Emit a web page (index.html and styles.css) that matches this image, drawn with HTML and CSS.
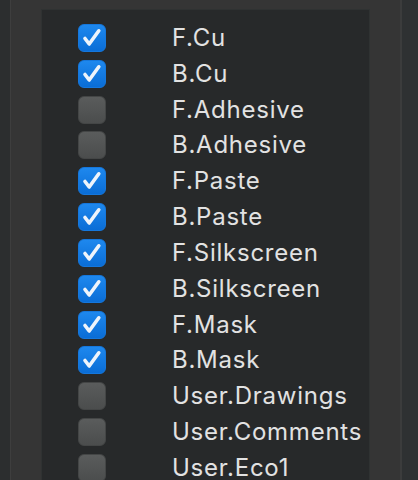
FILE: index.html
```html
<!DOCTYPE html>
<html>
<head>
<meta charset="utf-8">
<link rel="stylesheet" href="styles.css">
</head>
<body>
<div class="page">
  <div class="left-strip"></div>
  <div class="panel">
    <div class="list">
      <div class="row"><span class="cb on"><svg viewBox="0 0 26 26"><path d="M6 13.5 L10.2 19 L19.8 5.8"/></svg></span><span class="label">F.Cu</span></div>
      <div class="row"><span class="cb on"><svg viewBox="0 0 26 26"><path d="M6 13.5 L10.2 19 L19.8 5.8"/></svg></span><span class="label">B.Cu</span></div>
      <div class="row"><span class="cb"></span><span class="label">F.Adhesive</span></div>
      <div class="row"><span class="cb"></span><span class="label">B.Adhesive</span></div>
      <div class="row"><span class="cb on"><svg viewBox="0 0 26 26"><path d="M6 13.5 L10.2 19 L19.8 5.8"/></svg></span><span class="label">F.Paste</span></div>
      <div class="row"><span class="cb on"><svg viewBox="0 0 26 26"><path d="M6 13.5 L10.2 19 L19.8 5.8"/></svg></span><span class="label">B.Paste</span></div>
      <div class="row"><span class="cb on"><svg viewBox="0 0 26 26"><path d="M6 13.5 L10.2 19 L19.8 5.8"/></svg></span><span class="label">F.Silkscreen</span></div>
      <div class="row"><span class="cb on"><svg viewBox="0 0 26 26"><path d="M6 13.5 L10.2 19 L19.8 5.8"/></svg></span><span class="label">B.Silkscreen</span></div>
      <div class="row"><span class="cb on"><svg viewBox="0 0 26 26"><path d="M6 13.5 L10.2 19 L19.8 5.8"/></svg></span><span class="label">F.Mask</span></div>
      <div class="row"><span class="cb on"><svg viewBox="0 0 26 26"><path d="M6 13.5 L10.2 19 L19.8 5.8"/></svg></span><span class="label">B.Mask</span></div>
      <div class="row"><span class="cb"></span><span class="label">User.Drawings</span></div>
      <div class="row"><span class="cb"></span><span class="label">User.Comments</span></div>
      <div class="row"><span class="cb"></span><span class="label">User.Eco1</span></div>
    </div>
  </div>
  <div class="right-strip"></div>
</div>
</body>
</html>
```
FILE: styles.css
```css
html, body {
  margin: 0;
  padding: 0;
  height: 100%;
  overflow: hidden;
  background: #353535;
  font-family: Inter, "Noto Sans", sans-serif;
}
.page {
  display: flex;
  height: 480px;
}
.left-strip {
  width: 10px;
  background: #2c2e2f;
  border-right: 1px solid #3e3e3e;
}
.panel {
  width: 389px;
  background: #353535;
  padding: 9px 0 0 30px;
  box-sizing: border-box;
  overflow: hidden;
}
.list {
  width: 329px;
  height: 520px;
  box-sizing: border-box;
  background: #27292a;
  border: 1px solid #2f3232;
  padding-top: 10px;
}
.row {
  height: 35.83px;
  display: flex;
  align-items: center;
}
.cb {
  width: 28px;
  height: 28px;
  margin-left: 36px;
  margin-right: 66px;
  box-sizing: border-box;
  border-radius: 6px;
  background: linear-gradient(#5a5c5c, #4b4d4d);
  border: 1px solid #444646;
  display: flex;
}
.cb.on {
  background: linear-gradient(#1e88ee, #0a6dd6);
  border: 1px solid #1577dc;
}
.cb svg {
  width: 26px;
  height: 26px;
}
.cb path {
  fill: none;
  stroke: #eef4fb;
  stroke-width: 3.6;
  stroke-linecap: round;
  stroke-linejoin: round;
}
.label {
  color: #e2e2e2;
  font-size: 24px;
  letter-spacing: 0.75px;
  line-height: 1;
}
.right-strip {
  flex: 1;
  background: #2e3132;
  border-left: 2px solid #3b3c3c;
}
```
